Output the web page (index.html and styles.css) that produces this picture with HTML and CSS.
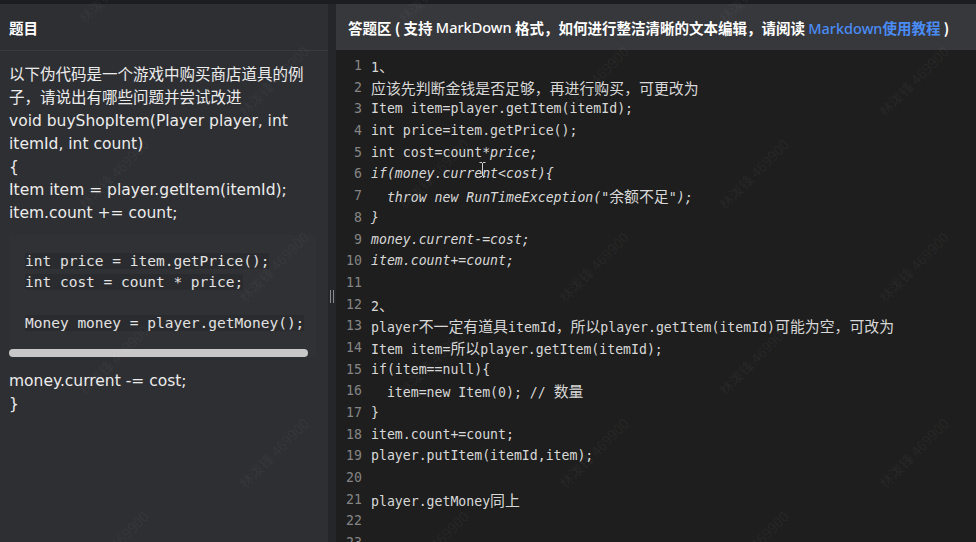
FILE: index.html
```html
<!DOCTYPE html>
<html lang="zh-CN">
<head>
<meta charset="utf-8">
<title>答题</title>
<link rel="stylesheet" href="styles.css">
</head>
<body>
<div class="topbar"></div>
<div class="main">
  <section class="question">
    <header class="q-head">题目</header>
    <div class="q-body">
      <p>以下伪代码是一个游戏中购买商店道具的例子，请说出有哪些问题并尝试改进<br>void buyShopItem(Player player, int itemId, int count)<br>{<br>Item item = player.getItem(itemId);<br>item.count += count;</p>
      <div class="codeblock">
        <pre><code><span>int price = item.getPrice();</span>
<span>int cost = count * price;</span>

<span>Money money = player.getMoney();</span></code></pre>
        <div class="hscroll"></div>
      </div>
      <p>money.current -= cost;<br>}</p>
    </div>
  </section>
  <div class="splitter"><span class="grip"></span></div>
  <section class="answer">
    <header class="a-head">答题区 ( 支持 <span class="lat">MarkDown</span> 格式，如何进行整洁清晰的文本编辑，请阅读&nbsp;<a class="link" href="#"><span class="lat">Markdown</span>使用教程</a> )</header>
    <div class="editor">
      <div class="ln"><span class="num">1</span><span class="txt">1<span class="zh">、</span></span></div>
      <div class="ln"><span class="num">2</span><span class="txt"><span class="zh">应该先判断金钱是否足够，再进行购买，可更改为</span></span></div>
      <div class="ln"><span class="num">3</span><span class="txt">Item item=player.getItem(itemId);</span></div>
      <div class="ln"><span class="num">4</span><span class="txt">int price=item.getPrice();</span></div>
      <div class="ln"><span class="num">5</span><span class="txt">int cost=count<em>*price;</em></span></div>
      <div class="ln"><span class="num">6</span><span class="txt"><em>if(money.current&lt;cost){</em></span></div>
      <div class="ln"><span class="num">7</span><span class="txt"><em>  throw new RunTimeException("<span class="zh">余额不足</span>");</em></span></div>
      <div class="ln"><span class="num">8</span><span class="txt"><em>}</em></span></div>
      <div class="ln"><span class="num">9</span><span class="txt"><em>money.current-=cost;</em></span></div>
      <div class="ln"><span class="num">10</span><span class="txt"><em>item.count+=count;</em></span></div>
      <div class="ln"><span class="num">11</span><span class="txt"></span></div>
      <div class="ln"><span class="num">12</span><span class="txt">2<span class="zh">、</span></span></div>
      <div class="ln"><span class="num">13</span><span class="txt">player<span class="zh">不一定有道具</span>itemId<span class="zh">，所以</span>player.getItem(itemId)<span class="zh">可能为空，可改为</span></span></div>
      <div class="ln"><span class="num">14</span><span class="txt">Item item=<span class="zh">所以</span>player.getItem(itemId);</span></div>
      <div class="ln"><span class="num">15</span><span class="txt">if(item==null){</span></div>
      <div class="ln"><span class="num">16</span><span class="txt">  item=new Item(0); // <span class="zh">数量</span></span></div>
      <div class="ln"><span class="num">17</span><span class="txt">}</span></div>
      <div class="ln"><span class="num">18</span><span class="txt">item.count+=count;</span></div>
      <div class="ln"><span class="num">19</span><span class="txt">player.putItem(itemId,item);</span></div>
      <div class="ln"><span class="num">20</span><span class="txt"></span></div>
      <div class="ln"><span class="num">21</span><span class="txt">player.getMoney<span class="zh">同上</span></span></div>
      <div class="ln"><span class="num">22</span><span class="txt"></span></div>
      <div class="ln"><span class="num">23</span><span class="txt"></span></div>
    </div>
  </section>
</div>

<svg class="ibeam" width="7" height="15" viewBox="0 0 7 15" aria-hidden="true"><path d="M0.5 0.5h2.5M4 0.5h2.5M3.5 1v13M0.5 14.5h2.5M4 14.5h2.5" stroke="#cfcfcf" stroke-width="1" fill="none"/></svg>

<div class="watermarks" aria-hidden="true">
  <div class="wm">林泼锋 469900</div><div></div><div class="wm">林泼锋 469900</div><div></div><div class="wm">林泼锋 469900</div><div></div>
  <div></div><div class="wm">林泼锋 469900</div><div></div><div class="wm">林泼锋 469900</div><div></div><div class="wm">林泼锋 469900</div>
  <div class="wm">林泼锋 469900</div><div></div><div class="wm">林泼锋 469900</div><div></div><div class="wm">林泼锋 469900</div><div></div>
  <div></div><div class="wm">林泼锋 469900</div><div></div><div class="wm">林泼锋 469900</div><div></div><div class="wm">林泼锋 469900</div>
  <div class="wm">林泼锋 469900</div><div></div><div class="wm">林泼锋 469900</div><div></div><div class="wm">林泼锋 469900</div><div></div>
  <div></div><div class="wm">林泼锋 469900</div><div></div><div class="wm">林泼锋 469900</div><div></div><div class="wm">林泼锋 469900</div>
  <div class="wm">林泼锋 469900</div><div></div><div class="wm">林泼锋 469900</div><div></div><div class="wm">林泼锋 469900</div><div></div>
</div>
</body>
</html>
```

FILE: styles.css
```css
html, body {
  margin: 0;
  padding: 0;
}

body {
  position: relative;
  width: 976px;
  height: 542px;
  overflow: hidden;
  background: #2e2f33;
  color: #ececec;
  font-family: "DejaVu Sans", "Noto Sans CJK SC", sans-serif;
}

.topbar {
  height: 4px;
  background: #1c1d20;
}

.main {
  display: flex;
  height: 538px;
}

/* ---------- question panel ---------- */
.question {
  flex: none;
  width: 328px;
  background: #2e2f33;
}

.q-head {
  box-sizing: border-box;
  height: 47px;
  display: flex;
  align-items: center;
  padding-left: 9px;
  border-bottom: 1px solid #393a3f;
  font-family: "Noto Sans CJK SC", sans-serif;
  font-weight: 700;
  font-size: 14.5px;
  color: #ffffff;
}

.q-body {
  padding: 13px 12px 0 9px;
  font-size: 15.5px;
  line-height: 23px;
}

.q-body p {
  margin: 0;
}

.codeblock {
  margin: 10px 0 12px;
  padding: 16px 0 1px;
  background: #303134;
}

.codeblock pre {
  margin: 0 0 16px 16px;
  font-family: "DejaVu Sans Mono", monospace;
  font-size: 14.5px;
  line-height: 20.5px;
  color: #e2e2e2;
  white-space: pre;
  overflow: hidden;
}

.codeblock code span {
  background: #2a2b2e;
}

.hscroll {
  width: 299px;
  height: 8px;
  border-radius: 4px;
  background: #c8c8c8;
}

/* ---------- splitter ---------- */
.splitter {
  flex: none;
  width: 8px;
  box-sizing: border-box;
  padding-top: 46px;
  background: #25262a;
  display: flex;
  align-items: center;
  justify-content: center;
}

.grip {
  width: 2px;
  height: 13px;
  border-left: 1px solid #8a8a8d;
  border-right: 1px solid #8a8a8d;
}

/* ---------- answer panel ---------- */
.answer {
  flex: 1;
  min-width: 0;
  background: #1e1e1e;
}

.a-head {
  box-sizing: border-box;
  height: 46px;
  display: flex;
  align-items: center;
  padding-left: 12px;
  background: #37383c;
  font-family: "Noto Sans CJK SC", sans-serif;
  font-weight: 700;
  font-size: 14.5px;
  color: #ffffff;
  white-space: pre;
}

.a-head .lat {
  font-family: "Noto Sans", sans-serif;
  font-weight: 500;
}

.link {
  color: #4a8cf5;
  text-decoration: none;
}

.editor {
  padding-top: 5px;
  font-family: "DejaVu Sans Mono", "Noto Sans CJK SC", monospace;
  font-size: 13.2px;
  line-height: 21.7px;
  color: #d8d8d8;
}

.ln {
  display: flex;
  height: 21.7px;
}

.num {
  flex: none;
  width: 26px;
  text-align: right;
  color: #858585;
}

.txt {
  margin-left: 9px;
  white-space: pre;
}

.txt em {
  font-style: italic;
}

.zh {
  font-family: "Noto Sans CJK SC", sans-serif;
  font-size: 14.9px;
  font-style: normal;
}

/* ---------- overlays ---------- */
.ibeam {
  position: absolute;
  left: 479px;
  top: 162px;
}

.watermarks {
  position: absolute;
  left: 33px;
  top: -59px;
  display: grid;
  grid-template-columns: repeat(6, 160px);
  grid-template-rows: repeat(7, 93px);
  pointer-events: none;
}

.watermarks > div {
  display: flex;
  align-items: center;
  justify-content: center;
}

.wm {
  transform: rotate(-45deg);
  white-space: nowrap;
  font-family: "Noto Sans CJK SC", sans-serif;
  font-size: 14px;
  color: rgba(255, 255, 255, 0.055);
}
```
